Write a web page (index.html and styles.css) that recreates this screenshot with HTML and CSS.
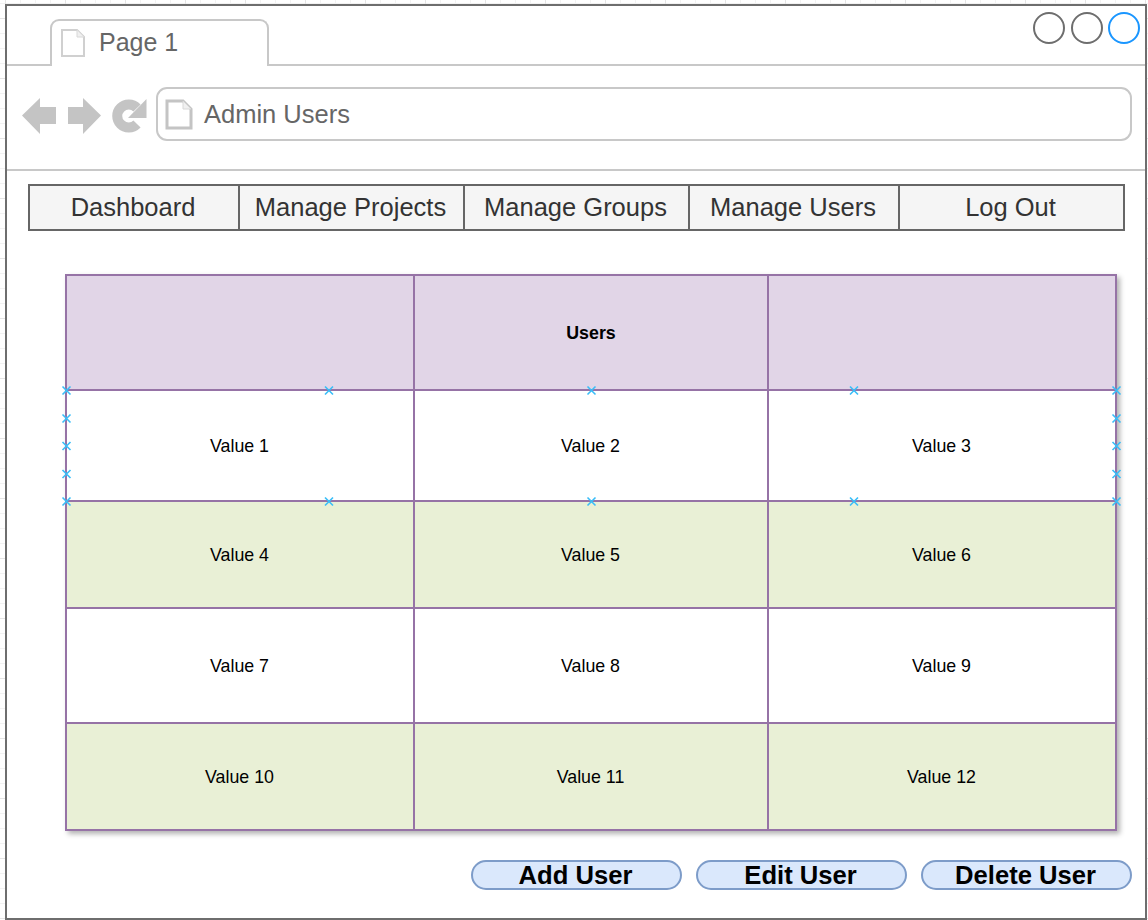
FILE: index.html
```html
<!DOCTYPE html>
<html>

<head>
    <meta charset="utf-8">
    <title>Admin Users</title>
    <link rel="stylesheet" href="styles.css">
</head>

<body>
    <div class="frame">

        <div class="tab-row">
            <div class="tab">
                <svg class="tab-icon" width="26" height="30" viewBox="0 0 26 30">
                    <path d="M2 2H17L24 9V28H2Z" fill="#fff" stroke="#d0d0d0" stroke-width="2" />
                    <path d="M17 2V9H24" fill="#f0f0f0" stroke="#d8d8d8" stroke-width="1" />
                </svg>
                <span>Page 1</span>
            </div>
            <div class="win-btns">
                <span class="win-btn"></span>
                <span class="win-btn"></span>
                <span class="win-btn active"></span>
            </div>
        </div>

        <div class="address-row">
            <svg class="nav-icons" width="126" height="38" viewBox="0 0 126 38">
                <!-- svg origin is page x=22, y=97 -->
                <path d="M0 18.5L18 1V10H34V27H18V37Z" fill="#c4c4c4" />
                <path d="M79 18.5L61 1V10H46V27H61V37Z" fill="#c4c4c4" />
                <path d="M115 27A11.5 11.5 0 1 1 115 11" fill="none" stroke="#c4c4c4" stroke-width="10" />
                <path d="M124.500 2V21H106Z" fill="#c4c4c4" />
            </svg>
            <div class="address">
                <svg class="address-icon" width="28" height="31" viewBox="0 0 28 31">
                    <path d="M2 2H18L26 10V29H2Z" fill="#fff" stroke="#c4c4c4" stroke-width="3" />
                    <path d="M18 2V10H26" fill="#f0f0f0" stroke="#d8d8d8" stroke-width="1" />
                </svg>
                <span>Admin Users</span>
            </div>
        </div>

        <div class="menu">
            <div class="menu-item">Dashboard</div>
            <div class="menu-item">Manage Projects</div>
            <div class="menu-item">Manage Groups</div>
            <div class="menu-item">Manage Users</div>
            <div class="menu-item">Log Out</div>
        </div>

        <div class="table-wrap">
            <table class="users">
                <colgroup>
                    <col class="side">
                    <col class="mid">
                    <col class="side">
                </colgroup>
                <tr class="head">
                    <th></th>
                    <th>Users</th>
                    <th></th>
                </tr>
                <tr class="row-a">
                    <td>Value 1</td>
                    <td>Value 2</td>
                    <td>Value 3</td>
                </tr>
                <tr class="row-b">
                    <td>Value 4</td>
                    <td>Value 5</td>
                    <td>Value 6</td>
                </tr>
                <tr class="row-c">
                    <td>Value 7</td>
                    <td>Value 8</td>
                    <td>Value 9</td>
                </tr>
                <tr class="row-d">
                    <td>Value 10</td>
                    <td>Value 11</td>
                    <td>Value 12</td>
                </tr>
            </table>

            <!-- connection points over row 1, svg origin is page x=60, y=270 -->
            <svg class="points" width="1064" height="240" viewBox="0 0 1064 240">
                <defs>
                    <path id="pt" d="M-4 -4L4 4M-4 4L4 -4" fill="none" stroke="#38bdf8" stroke-width="1.600" />
                </defs>
                <use href="#pt" x="6.500" y="120.500" />
                <use href="#pt" x="269" y="120.500" />
                <use href="#pt" x="531.500" y="120.500" />
                <use href="#pt" x="794" y="120.500" />
                <use href="#pt" x="1056.500" y="120.500" />
                <use href="#pt" x="6.500" y="148.500" />
                <use href="#pt" x="1056.500" y="148.500" />
                <use href="#pt" x="6.500" y="176" />
                <use href="#pt" x="1056.500" y="176" />
                <use href="#pt" x="6.500" y="204" />
                <use href="#pt" x="1056.500" y="204" />
                <use href="#pt" x="6.500" y="231.500" />
                <use href="#pt" x="269" y="231.500" />
                <use href="#pt" x="531.500" y="231.500" />
                <use href="#pt" x="794" y="231.500" />
                <use href="#pt" x="1056.500" y="231.500" />
            </svg>
        </div>

        <div class="actions">
            <button class="action">Add User</button>
            <button class="action">Edit User</button>
            <button class="action">Delete User</button>
        </div>

    </div>
</body>

</html>
```

FILE: styles.css
```css
html,
body {
    margin: 0;
    padding: 0;
}

body {
    width: 1148px;
    height: 920px;
    overflow: hidden;
    font-family: "Liberation Sans", Arial, sans-serif;
    background-color: #fff;
    background-image:
        linear-gradient(to right, #e4e4e4 1px, transparent 1px),
        linear-gradient(to bottom, #e4e4e4 1px, transparent 1px),
        linear-gradient(to right, #f2f2f2 1px, transparent 1px),
        linear-gradient(to bottom, #f2f2f2 1px, transparent 1px);
    background-size: 60px 60px, 60px 60px, 15px 15px, 15px 15px;
    background-position: 5px 18px, 5px 18px, 5px 3px, 5px 3px;
}

.frame {
    box-sizing: border-box;
    width: 1142px;
    height: 916px;
    margin: 4px 0 0 5px;
    border: 2px solid #6e6e6e;
    background: #fff;
}

/* tab strip */
.tab-row {
    box-sizing: border-box;
    display: flex;
    align-items: flex-end;
    height: 60px;
    padding: 0 5px 0 43px;
    border-bottom: 2px solid #c8c8c8;
}

.tab {
    box-sizing: border-box;
    display: flex;
    align-items: center;
    width: 219px;
    height: 47px;
    margin-bottom: -2px;
    padding: 0 0 2px 8px;
    border: 2px solid #c8c8c8;
    border-bottom: none;
    border-radius: 9px 9px 0 0;
    background: #fff;
    color: #666;
    font-size: 25px;
}

.tab-icon {
    margin-right: 13px;
}

.win-btns {
    display: flex;
    align-self: flex-start;
    gap: 5.5px;
    margin-top: 6px;
    margin-left: auto;
}

.win-btn {
    box-sizing: border-box;
    width: 32px;
    height: 32px;
    border: 2px solid #6e6e6e;
    border-radius: 50%;
}

.win-btn.active {
    border-color: #1a96ff;
}

/* address bar */
.address-row {
    box-sizing: border-box;
    display: flex;
    align-items: flex-start;
    height: 105px;
    padding: 21px 13px 0 15px;
    border-bottom: 2px solid #c8c8c8;
}

.nav-icons {
    flex: none;
    margin: 10px 8px 0 0;
}

.address {
    box-sizing: border-box;
    display: flex;
    align-items: center;
    flex: 1;
    height: 54px;
    padding-left: 7px;
    border: 2px solid #c8c8c8;
    border-radius: 11px;
    color: #666;
    font-size: 25.500px;
}

.address-icon {
    margin-right: 11px;
}

/* menu */
.menu {
    box-sizing: border-box;
    display: grid;
    grid-template-columns: 208px 225px 225px 210px 1fr;
    width: 1097px;
    height: 47px;
    margin: 13px 0 0 21px;
    border: 2px solid #666;
    background: #f5f5f5;
}

.menu-item {
    display: flex;
    align-items: center;
    justify-content: center;
    padding-right: 2px;
    border-left: 2px solid #666;
    color: #333;
    font-size: 25.500px;
}

.menu-item:first-child {
    border-left: none;
}

/* table */
.table-wrap {
    position: relative;
    width: 1052px;
    margin: 43px 0 0 58px;
}

.users {
    width: 1052px;
    table-layout: fixed;
    border-collapse: collapse;
    box-shadow: 3px 3px 5px rgba(0, 0, 0, .3);
    font-size: 17.800px;
}

.side {
    width: 348px;
}

.mid {
    width: 354px;
}

.users th,
.users td {
    padding: 2px 1px 0 0;
    border: 2px solid #9673a6;
    text-align: center;
    color: #000;
}

.users th {
    padding-right: 0;
}

.head {
    height: 115px;
    background: #e1d5e7;
}

.row-a {
    height: 111px;
    background: #fff;
}

.row-b {
    height: 107px;
    background: #e9f0d6;
}

.row-c {
    height: 115px;
    background: #fff;
}

.row-d {
    height: 107px;
    background: #e9f0d6;
}

.points {
    position: absolute;
    top: -4px;
    left: -5px;
}

/* buttons */
.actions {
    display: flex;
    justify-content: flex-end;
    gap: 14px;
    margin-top: 29px;
    padding-right: 13px;
}

.action {
    box-sizing: border-box;
    width: 211px;
    height: 30px;
    padding: 0 2px 0 0;
    border: 2px solid #7d9cc9;
    border-radius: 15px;
    background: #dae8fc;
    color: #000;
    font-family: "Liberation Sans", Arial, sans-serif;
    font-size: 25.600px;
    font-weight: bold;
    line-height: 26px;
}
```
